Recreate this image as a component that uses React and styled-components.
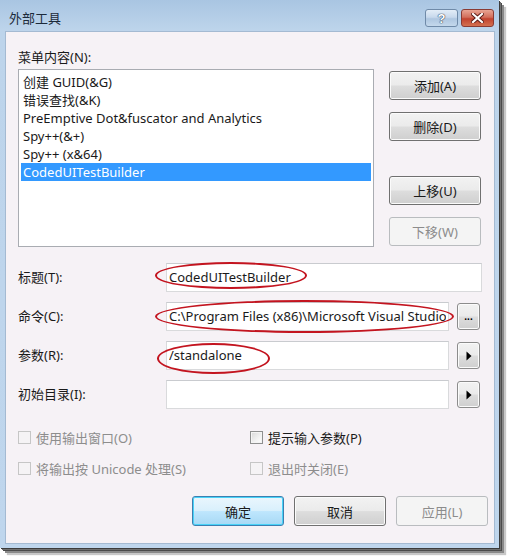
import React from "react";
import styled, { createGlobalStyle, css } from "styled-components";

const GlobalStyle = createGlobalStyle`
  body {
    margin: 0;
    background: #ffffff;
    font-family: "Noto Sans", "Noto Sans CJK SC", sans-serif;
  }
`;

const Page = styled.div`
  width: 507px;
  height: 556px;
  position: relative;
  overflow: hidden;
`;

const Window = styled.div`
  width: 499px;
  height: 548px;
  display: flex;
  flex-direction: column;
  background: linear-gradient(180deg, #a9c5e2 0px, #bdd4eb 30px, #bfd6ed 100%);
  box-shadow: 1px 1px 0 #3c3c3c, 2px 2px 0 #707070, 3px 3px 0 #4b4b4b,
    5px 5px 0 #8a8a8a, 7px 7px 1px #c8c8c8;
`;

const TitleBar = styled.div`
  height: 31px;
  flex: none;
  display: flex;
  align-items: flex-start;
  justify-content: space-between;
  padding: 0 5px 0 9px;
`;

const Title = styled.div`
  font-family: "Noto Sans CJK SC", sans-serif;
  font-size: 13px;
  line-height: 18px;
  margin-top: 9px;
  color: #1c2a3a;
`;

const CaptionButtons = styled.div`
  display: flex;
  gap: 3px;
  margin-top: 9px;
`;

const CaptionButton = styled.div`
  width: 33px;
  height: 18px;
  box-sizing: border-box;
  border-radius: 3px;
  display: flex;
  align-items: center;
  justify-content: center;
  ${(p) =>
    p.$close
      ? css`
          border: 1px solid #8a3b33;
          background: linear-gradient(180deg, #e8a493 0%, #d26e5b 45%, #c2432f 55%, #d3704f 100%);
        `
      : css`
          border: 1px solid #6f8aa8;
          background: linear-gradient(180deg, #e3edf7 0%, #c8d9ec 45%, #aec6e0 55%, #c4d8ec 100%);
        `}
`;

const HelpGlyph = styled.span`
  font-family: "Liberation Sans", sans-serif;
  font-weight: bold;
  font-size: 13px;
  line-height: 1;
  color: #ffffff;
  text-shadow: 0 0 1px #33465c, 0 0 1px #33465c, 0 0 1px #33465c;
`;

const Client = styled.div`
  flex: 1;
  margin: 0 4px 4px 5px;
  background: #f6f2f6;
  border: 1px solid #a4bad2;
  padding: 17px 12px 0 12px;
  display: flex;
  flex-direction: column;
  font-size: 13px;
  color: #1a1a1a;
`;

const SectionLabel = styled.div`
  line-height: 16px;
  height: 16px;
`;

const TopSection = styled.div`
  display: grid;
  grid-template-columns: 356px 92px;
  column-gap: 15px;
  margin-top: 4px;
`;

const ListBox = styled.div`
  height: 178px;
  box-sizing: border-box;
  background: #ffffff;
  border: 1px solid #a9acb2;
  padding: 3px 2px;
`;

const ListItem = styled.div`
  height: 18px;
  line-height: 18px;
  padding-left: 2px;
  white-space: nowrap;
  ${(p) =>
    p.$selected &&
    css`
      background: #3399ff;
      color: #ffffff;
    `}
`;

const SideButtons = styled.div`
  display: flex;
  flex-direction: column;
  padding-top: 2px;
`;

const Button = styled.div`
  box-sizing: border-box;
  width: 92px;
  height: ${(p) => p.$height || 29}px;
  margin-top: ${(p) => p.$gap || 0}px;
  border-radius: 3px;
  display: flex;
  align-items: center;
  justify-content: center;
  color: #1a1a1a;
  border: 1px solid #707070;
  box-shadow: inset 0 0 0 1px #fbfbfb;
  background: linear-gradient(180deg, #f2f2f2 0%, #ebebeb 48%, #dddddd 52%, #cfcfcf 100%);
  ${(p) =>
    p.$disabled &&
    css`
      color: #8c8c8c;
      border-color: #b9bcbf;
      box-shadow: none;
      background: #f4f4f4;
    `}
  ${(p) =>
    p.$default &&
    css`
      border-color: #3c7fb1;
      box-shadow: inset 0 0 0 1px #48d3f8;
      background: linear-gradient(180deg, #eaf6fd 0%, #d9f0fc 48%, #bee6fd 52%, #a7d9f5 100%);
    `}
`;

const FormGrid = styled.div`
  display: grid;
  grid-template-columns: 140px minmax(0, 1fr) 25px;
  column-gap: 8px;
  row-gap: 10px;
  margin-top: 16px;
`;

const FieldLabel = styled.div`
  display: flex;
  align-items: center;
  height: 29px;
  padding-bottom: 3px;
  box-sizing: border-box;
`;

const Field = styled.div`
  position: relative;
  min-width: 0;
  height: 29px;
  box-sizing: border-box;
  background: #ffffff;
  border: 1px solid #d9dadc;
  border-top-color: #c9cbcf;
  padding: 0 2px;
  display: flex;
  align-items: center;
  white-space: nowrap;
  ${(p) =>
    p.$wide &&
    css`
      grid-column: 2 / 4;
    `}
`;

const FieldText = styled.span`
  overflow: hidden;
  display: block;
  width: 100%;
  position: relative;
  top: -1px;
`;

const Ellipse = styled.div`
  position: absolute;
  left: ${(p) => p.$x}px;
  top: ${(p) => p.$y}px;
  width: ${(p) => p.$w}px;
  height: ${(p) => p.$h}px;
  box-sizing: border-box;
  border: 2px solid #c3141f;
  border-radius: 50%;
  pointer-events: none;
`;

const SmallButton = styled.div`
  width: 23px;
  height: 27px;
  margin-top: 1px;
  box-sizing: border-box;
  border: 1px solid #8c8c8c;
  border-radius: 3px;
  box-shadow: inset 0 0 0 1px #fbfbfb;
  background: linear-gradient(180deg, #f2f2f2 0%, #ebebeb 48%, #dddddd 52%, #cfcfcf 100%);
  display: flex;
  align-items: center;
  justify-content: center;
  font-family: "Liberation Sans", sans-serif;
  font-weight: bold;
  font-size: 10px;
  color: #000;
`;

const ChecksGrid = styled.div`
  display: grid;
  grid-template-columns: 232px 1fr;
  row-gap: 11px;
  margin-top: 18px;
`;

const CheckRow = styled.div`
  display: flex;
  align-items: center;
  height: 20px;
  gap: 5px;
  color: ${(p) => (p.$disabled ? "#8d8d8d" : "#1a1a1a")};
`;

const Box = styled.span`
  width: 13px;
  height: 13px;
  box-sizing: border-box;
  border: 1px solid ${(p) => (p.$disabled ? "#c6c6c6" : "#8e8f8f")};
  background: ${(p) =>
    p.$disabled
      ? "#f5f3f5"
      : "linear-gradient(135deg, #d8d8d8 0%, #f2f2f2 60%, #ffffff 100%)"};
  box-shadow: ${(p) => (p.$disabled ? "none" : "inset 0 0 0 1px #f4f4f4")};
  flex: none;
`;

const Footer = styled.div`
  display: flex;
  justify-content: flex-end;
  gap: 10px;
  margin-top: 18px;
  margin-right: -6px;
`;

const menuItems = [
  "创建 GUID(&G)",
  "错误查找(&K)",
  "PreEmptive Dot&fuscator and Analytics",
  "Spy++(&+)",
  "Spy++ (x&64)",
  "CodedUITestBuilder",
];

const CloseIcon = () => (
  <svg width="13" height="10" viewBox="0 0 13 10">
    <path
      d="M2 1 L11 9 M11 1 L2 9"
      stroke="#5a1a14"
      strokeWidth="4"
      strokeLinecap="square"
    />
    <path
      d="M2 1 L11 9 M11 1 L2 9"
      stroke="#ffffff"
      strokeWidth="2.2"
      strokeLinecap="square"
    />
  </svg>
);

const PlayIcon = () => (
  <svg width="6" height="10" viewBox="0 0 6 10">
    <path d="M0.5 0.5 L5.5 5 L0.5 9.5 Z" fill="#000" />
  </svg>
);

const Check = ({ label, disabled }) => (
  <CheckRow $disabled={disabled}>
    <Box $disabled={disabled} />
    <span>{label}</span>
  </CheckRow>
);

export default function App() {
  return (
    <>
      <GlobalStyle />
      <Page>
        <Window>
          <TitleBar>
            <Title>外部工具</Title>
            <CaptionButtons>
              <CaptionButton>
                <HelpGlyph>?</HelpGlyph>
              </CaptionButton>
              <CaptionButton $close>
                <CloseIcon />
              </CaptionButton>
            </CaptionButtons>
          </TitleBar>
          <Client>
            <SectionLabel>菜单内容(N):</SectionLabel>
            <TopSection>
              <ListBox>
                {menuItems.map((item, i) => (
                  <ListItem key={item} $selected={i === menuItems.length - 1}>
                    {item}
                  </ListItem>
                ))}
              </ListBox>
              <SideButtons>
                <Button>添加(A)</Button>
                <Button $gap={12}>删除(D)</Button>
                <Button $gap={35}>上移(U)</Button>
                <Button $gap={12} $disabled>
                  下移(W)
                </Button>
              </SideButtons>
            </TopSection>

            <FormGrid>
              <FieldLabel>标题(T):</FieldLabel>
              <Field $wide>
                <FieldText>CodedUITestBuilder</FieldText>
                <Ellipse $x={-12} $y={-2} $w={152} $h={27} />
              </Field>

              <FieldLabel>命令(C):</FieldLabel>
              <Field>
                <FieldText>
                  C:\Program Files (x86)\Microsoft Visual Studio 11.0\Common7\IDE\CodedUITestBuilder.exe
                </FieldText>
                <Ellipse $x={-12} $y={-3} $w={299} $h={33} />
              </Field>
              <SmallButton>...</SmallButton>

              <FieldLabel>参数(R):</FieldLabel>
              <Field>
                <FieldText>/standalone</FieldText>
                <Ellipse $x={-10} $y={1} $w={113} $h={31} />
              </Field>
              <SmallButton>
                <PlayIcon />
              </SmallButton>

              <FieldLabel>初始目录(I):</FieldLabel>
              <Field />
              <SmallButton>
                <PlayIcon />
              </SmallButton>
            </FormGrid>

            <ChecksGrid>
              <Check label="使用输出窗口(O)" disabled />
              <Check label="提示输入参数(P)" />
              <Check label="将输出按 Unicode 处理(S)" disabled />
              <Check label="退出时关闭(E)" disabled />
            </ChecksGrid>

            <Footer>
              <Button $height={30} $default>
                确定
              </Button>
              <Button $height={30}>取消</Button>
              <Button $height={30} $disabled>
                应用(L)
              </Button>
            </Footer>
          </Client>
        </Window>
      </Page>
    </>
  );
}
